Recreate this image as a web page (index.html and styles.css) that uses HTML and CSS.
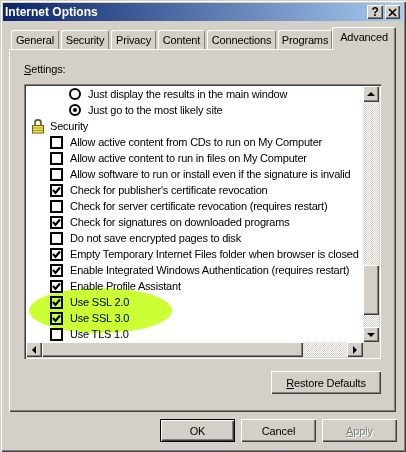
FILE: index.html
```html
<!DOCTYPE html>
<html lang="en">
<head>
<meta charset="utf-8">
<title>Internet Options</title>
<link rel="stylesheet" href="styles.css">
</head>
<body>
<svg class="defs" width="0" height="0" aria-hidden="true">
  <symbol id="tick" viewBox="0 0 9 9"><path d="M1 4 L3.5 6.8 L8 1.5" fill="none" stroke="#000" stroke-width="2.2"/></symbol>
</svg>
<div class="window">
  <div class="titlebar">
    <span class="title">Internet Options</span>
    <div class="caption-buttons">
      <span class="caption-btn">?</span>
      <span class="caption-btn close">
        <svg width="9" height="9" viewBox="0 0 9 9"><path d="M1 1 L8 8 M8 1 L1 8" stroke="#000" stroke-width="1.6" fill="none"/></svg>
      </span>
    </div>
  </div>
  <div class="tabs">
    <span class="tab w48">General</span>
    <span class="tab w48">Security</span>
    <span class="tab w45">Privacy</span>
    <span class="tab w47">Content</span>
    <span class="tab w69">Connections</span>
    <span class="tab w54">Programs</span>
    <span class="tab active">Advanced</span>
  </div>
  <div class="panel">
    <div class="settings-label"><u>S</u>ettings:</div>
    <div class="listbox">
      <div class="list-main">
        <div class="rows">
          <div class="row radio-row"><span class="radio"></span>Just display the results in the main window</div>
          <div class="row radio-row"><span class="radio on"></span>Just go to the most likely site</div>
          <div class="row group-row">
            <svg class="lock" width="14" height="16" viewBox="0 0 14 16">
              <path d="M4 8 V4.5 C4 1 10 1 10 4.5 V8" fill="none" stroke="#5a5a20" stroke-width="1.6"/>
              <rect x="1.5" y="7.5" width="11" height="7.5" fill="#f2e35a" stroke="#6b6410"/>
              <path d="M2 10 H12 M2 12.500 H12" stroke="#a89a20"/>
            </svg>Security</div>
          <div class="row check-row"><span class="check"></span>Allow active content from CDs to run on My Computer</div>
          <div class="row check-row"><span class="check"></span>Allow active content to run in files on My Computer</div>
          <div class="row check-row"><span class="check"></span>Allow software to run or install even if the signature is invalid</div>
          <div class="row check-row"><span class="check"><svg class="tick"><use href="#tick"/></svg></span>Check for publisher's certificate revocation</div>
          <div class="row check-row"><span class="check"></span>Check for server certificate revocation (requires restart)</div>
          <div class="row check-row"><span class="check"><svg class="tick"><use href="#tick"/></svg></span>Check for signatures on downloaded programs</div>
          <div class="row check-row"><span class="check"></span>Do not save encrypted pages to disk</div>
          <div class="row check-row"><span class="check"><svg class="tick"><use href="#tick"/></svg></span>Empty Temporary Internet Files folder when browser is closed</div>
          <div class="row check-row"><span class="check"><svg class="tick"><use href="#tick"/></svg></span>Enable Integrated Windows Authentication (requires restart)</div>
          <div class="row check-row"><span class="check"><svg class="tick"><use href="#tick"/></svg></span>Enable Profile Assistant</div>
          <div class="row check-row"><span class="check"><svg class="tick"><use href="#tick"/></svg></span>Use SSL 2.0</div>
          <div class="row check-row"><span class="check"><svg class="tick"><use href="#tick"/></svg></span>Use SSL 3.0</div>
          <div class="row check-row"><span class="check"></span>Use TLS 1.0</div>
        </div>
        <div class="vscroll">
          <span class="sb-btn"><span class="arrow up"></span></span>
          <span class="track t-top"></span>
          <span class="thumb-v"></span>
          <span class="track t-bottom"></span>
          <span class="sb-btn"><span class="arrow down"></span></span>
        </div>
      </div>
      <div class="hscroll">
        <span class="sb-btn"><span class="arrow left"></span></span>
        <span class="thumb-h"></span>
        <span class="track t-h"></span>
        <span class="sb-btn"><span class="arrow right"></span></span>
        <span class="corner"></span>
      </div>
      <div class="highlight"></div>
    </div>
    <div class="restore-line"><span class="btn restore"><span><u>R</u>estore Defaults</span></span></div>
  </div>
  <div class="footer">
    <span class="btn default">OK</span>
    <span class="btn">Cancel</span>
    <span class="btn disabled"><span><u>A</u>pply</span></span>
  </div>
</div>
</body>
</html>
```

FILE: styles.css
```css
* { box-sizing: border-box; }
html, body { margin: 0; padding: 0; }
body { width: 406px; height: 452px; overflow: hidden; background: #d4d0c8; font-family: "Liberation Sans", Arial, sans-serif; font-size: 11px; letter-spacing: -0.15px; color: #000; }
.defs { position: absolute; }

.window { width: 406px; height: 452px; padding: 3px; background: #d4d0c8; box-shadow: inset 1px 1px 0 #d4d0c8, inset 2px 2px 0 #fff, inset -1px -1px 0 #404040, inset -2px -2px 0 #808080; }

.titlebar { height: 18px; display: flex; align-items: center; justify-content: space-between; padding: 0 3px 0 2px; background: linear-gradient(to right, #0a246a, #a6caf0); }
.title { color: #fff; font-weight: bold; font-size: 12px; letter-spacing: 0; }
.caption-buttons { display: flex; gap: 2px; }
.caption-btn { width: 16px; height: 14px; display: flex; align-items: center; justify-content: center; background: #d4d0c8; font-weight: bold; font-size: 12px; box-shadow: inset 1px 1px 0 #fff, inset -1px -1px 0 #404040, inset -2px -2px 0 #808080; }
.caption-btn.close { width: 15px; }

.tabs { height: 22px; margin-top: 6px; padding-left: 8px; display: flex; align-items: flex-end; position: relative; z-index: 1; }
.tab { height: 19px; margin-right: 2px; margin-bottom: 0; padding-top: 4px; text-align: center; background: #d4d0c8; border-radius: 2px 2px 0 0; box-shadow: inset 1px 1px 0 #fff, inset -1px 0 0 #808080; white-space: nowrap; }
.w48 { width: 48px; }
.w45 { width: 45px; }
.w47 { width: 47px; }
.w69 { width: 69px; }
.w54 { width: 54px; margin-right: 0; }
.tab.active { width: 64px; height: 23px; margin-right: 0; margin-bottom: -1px; padding-top: 4px; box-shadow: inset 1px 1px 0 #fff, inset -1px 0 0 #404040, inset -2px 0 0 #808080; }

.panel { width: 387px; height: 363px; margin-left: 6px; padding: 13px 15px 0; background: #d4d0c8; box-shadow: inset 1px 1px 0 #fff, inset -1px -1px 0 #404040, inset -2px -2px 0 #808080; }
.settings-label { height: 14px; line-height: 14px; margin-bottom: 8px; }

.listbox { width: 357px; height: 275px; padding: 2px; position: relative; background: #fff; box-shadow: inset 1px 1px 0 #808080, inset 2px 2px 0 #404040, inset -1px -1px 0 #fff, inset -2px -2px 0 #d4d0c8; }
.list-main { height: 256px; display: flex; }
.rows { flex: 1; overflow: hidden; letter-spacing: -0.2px; }
.row { height: 16px; line-height: 16px; display: flex; align-items: center; white-space: nowrap; }
.radio-row { padding-left: 43px; }
.check-row { padding-left: 24px; }
.group-row { padding-left: 5px; }
.radio { width: 12px; height: 12px; margin-right: 7px; border: 2px solid #000; border-radius: 50%; display: flex; align-items: center; justify-content: center; background: #fff; }
.radio.on::after { content: ""; width: 4px; height: 4px; border-radius: 50%; background: #000; }
.lock { margin-right: 5px; flex: none; }
.check { width: 13px; height: 13px; margin-right: 7px; flex: none; border: 2px solid #000; display: flex; align-items: center; justify-content: center; background: #fff; }
.tick { width: 9px; height: 9px; display: block; }

.vscroll { width: 16px; flex: none; display: flex; flex-direction: column; }
.sb-btn { width: 16px; height: 16px; flex: none; display: flex; align-items: center; justify-content: center; background: #d4d0c8; box-shadow: inset 1px 1px 0 #fff, inset -1px -1px 0 #404040, inset -2px -2px 0 #808080; }
.vscroll .sb-btn:last-child { height: 15px; }
.track { display: block; background-color: #fff; background-image: conic-gradient(#d4d0c8 25%, #fff 0 50%, #d4d0c8 0 75%, #fff 0); background-size: 2px 2px; }
.t-top { height: 163px; }
.t-bottom { height: 12px; }
.t-h { width: 44px; }
.thumb-v { height: 50px; flex: none; background: #d4d0c8; box-shadow: inset 1px 1px 0 #fff, inset -1px -1px 0 #404040, inset -2px -2px 0 #808080; }
.thumb-h { width: 261px; background: #d4d0c8; box-shadow: inset 1px 1px 0 #fff, inset -1px -1px 0 #404040, inset -2px -2px 0 #808080; }
.hscroll { height: 15px; display: flex; }
.hscroll .sb-btn { height: 15px; }
.corner { width: 16px; background: #d4d0c8; }
.arrow { width: 0; height: 0; border-style: solid; border-color: transparent; }
.arrow.up { border-width: 0 4px 4px; border-bottom-color: #000; }
.arrow.down { border-width: 4px 4px 0; border-top-color: #000; }
.arrow.left { border-width: 4px 4px 4px 0; border-right-color: #000; }
.arrow.right { border-width: 4px 0 4px 4px; border-left-color: #000; }

.highlight { position: absolute; left: 5px; top: 204px; width: 143px; height: 45px; border-radius: 50%; background: #ccff33; mix-blend-mode: multiply; pointer-events: none; }

.restore-line { display: flex; justify-content: flex-end; margin-top: 12px; }
.btn { width: 75px; height: 23px; display: flex; align-items: center; justify-content: center; background: #d4d0c8; box-shadow: inset 1px 1px 0 #fff, inset -1px -1px 0 #404040, inset -2px -2px 0 #808080; }
.restore { width: 110px; }
.footer { display: flex; justify-content: flex-end; gap: 6px; margin-top: 7px; padding-right: 6px; }
.btn.default { box-shadow: inset 0 0 0 1px #000, inset 2px 2px 0 #fff, inset -2px -2px 0 #404040, inset -3px -3px 0 #808080; }
.btn.disabled { color: #808080; text-shadow: 1px 1px 0 #fff; }
```
